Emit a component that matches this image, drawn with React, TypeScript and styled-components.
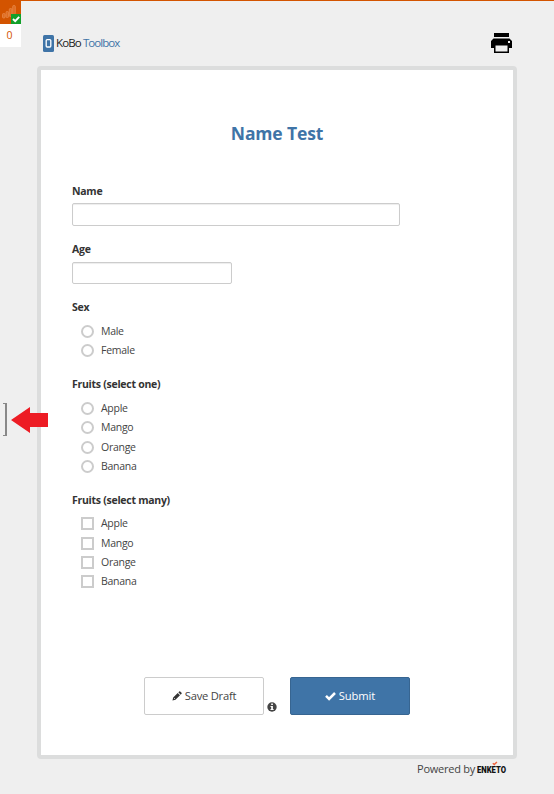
import React from "react";
import styled, { createGlobalStyle } from "styled-components";

const GlobalStyle = createGlobalStyle`
  * { box-sizing: border-box; }
  body {
    margin: 0;
    background: #efefef;
    color: #444;
    font-family: "Open Sans", "Noto Sans", sans-serif;
    font-size: 10.5px;
  }
`;

const Page = styled.div`
  position: relative;
  display: flex;
  width: 554px;
  height: 794px;
  overflow: hidden;
  border-top: 1px solid #d35400;
`;

const SideBar = styled.aside`
  flex: 0 0 37px;
  display: flex;
  flex-direction: column;
`;

const OfflineStatus = styled.div`
  width: 21px;
  height: 23px;
  background: #d35400;
  svg { display: block; }
`;

const QueueCount = styled.div`
  width: 21px;
  height: 23px;
  padding-right: 2px;
  background: #fff;
  color: #d35400;
  line-height: 22px;
  text-align: center;
`;

const QueueToggle = styled.div`
  width: 4px;
  height: 33px;
  margin: 356px 0 0 3px;
  border: 1px solid #888;
  border-left: 0;
  border-right-width: 2px;
`;

const Pointer = styled.svg`
  position: absolute;
  left: 11px;
  top: 406px;
`;

const Main = styled.main`
  width: 480px;
  display: flex;
  flex-direction: column;
`;

const Header = styled.header`
  height: 65px;
  display: flex;
  justify-content: space-between;
  align-items: flex-start;
  padding: 31px 5px 0 6px;
`;

const PrintIcon = styled.svg`
  display: block;
  margin-top: 1px;
`;

const Paper = styled.form`
  height: 693px;
  padding: 0 31px;
  border: 4px solid #dcdddd;
  border-radius: 4px;
  background: #fff;
`;

const Title = styled.h1`
  margin: 0;
  padding-top: 51px;
  height: 113px;
  color: #3f74a7;
  font-size: 17.5px;
  font-weight: 700;
  letter-spacing: -0.15px;
  line-height: 24px;
  text-align: center;
`;

const Question = styled.fieldset<{ $height: number }>`
  height: ${(p) => p.$height}px;
  margin: 0;
  padding: 0;
  border: 0;
`;

const Label = styled.div<{ $gap: number }>`
  height: 16px;
  margin-bottom: ${(p) => p.$gap}px;
  color: #333;
  font-size: 10.5px;
  font-weight: 700;
  letter-spacing: -0.27px;
  line-height: 16px;
  white-space: nowrap;
`;

const TextInput = styled.input<{ $width: number; $height: number }>`
  display: block;
  width: ${(p) => p.$width}px;
  height: ${(p) => p.$height}px;
  border: 1px solid #ccc;
  border-radius: 2px;
  background: #fff;
  box-shadow: inset 0 1px 1px rgba(0, 0, 0, 0.075);
  outline: 0;
`;

const Option = styled.label`
  display: flex;
  align-items: center;
  height: 19.3px;
  padding-left: 9px;
  gap: 7px;
  letter-spacing: -0.27px;
`;

const OptionText = styled.span`
  margin-top: -1px;
`;

const Choice = styled.input`
  appearance: none;
  width: 13px;
  height: 13px;
  margin: 0;
  border: 2px solid #ccc;
  border-radius: ${(p) => (p.type === "radio" ? "50%" : "0")};
  background: #fff;
`;

const Actions = styled.div`
  display: flex;
  align-items: flex-end;
  padding: 69px 0 0 72px;
`;

const Button = styled.button<{ $primary?: boolean }>`
  display: flex;
  align-items: center;
  justify-content: center;
  gap: 3px;
  width: 120px;
  height: 38px;
  padding: 0 0 1px;
  border: 1px solid ${(p) => (p.$primary ? "#376591" : "#ccc")};
  border-radius: 2px;
  background: ${(p) => (p.$primary ? "#3f74a7" : "#fff")};
  color: ${(p) => (p.$primary ? "#fff" : "#444")};
  font: 400 11.2px "Open Sans", sans-serif;
  letter-spacing: ${(p) => (p.$primary ? "-0.1px" : "-0.25px")};
`;

const InfoIcon = styled.svg`
  margin: 0 13px 3px 3px;
`;

const Footer = styled.footer`
  display: flex;
  justify-content: flex-end;
  align-items: center;
  gap: 2px;
  height: 20px;
  padding-right: 10px;
  font-size: 11px;
  letter-spacing: -0.25px;
  white-space: nowrap;
`;

const PoweredBy = styled.span`
  margin-top: -1px;
`;

const Brand = styled.div`
  display: flex;
  align-items: flex-start;
`;

const BrandWord = styled.span<{ $color: string; $spacing: number }>`
  margin-left: 2px;
  color: ${(p) => p.$color};
  font-size: 11.5px;
  line-height: 22px;
  letter-spacing: ${(p) => p.$spacing}px;
`;

const KoboLogo = () => (
  <Brand>
    <svg width="11" height="22" viewBox="0 0 11 22">
      <rect x="0" y="3" width="11" height="17" rx="1.5" fill="#3f74a7" />
      <rect x="3.2" y="7.6" width="4.6" height="7.4" rx="1" fill="none" stroke="#fff" strokeWidth="1.3" />
    </svg>
    <BrandWord $color="#222" $spacing={-0.85}>KoBo</BrandWord>
    <BrandWord $color="#3f74a7" $spacing={-0.95}>Toolbox</BrandWord>
  </Brand>
);

const EnketoLogo = () => (
  <svg width="30" height="16" viewBox="0 0 30 16" overflow="visible">
    <text x="0" y="12" fontFamily="Roboto" fontWeight="900" fontSize="9.6" letterSpacing="0" fill="#111" textLength="29" lengthAdjust="spacingAndGlyphs">ENKETO</text>
    <path d="M15.8 2.3l1.5 1.3L19.9 1" fill="none" stroke="#ee6540" strokeWidth="1.5" />
  </svg>
);

type QuestionData = { label: string; type: "radio" | "checkbox"; height: number; gap: number; options: string[] };

const fruits = ["Apple", "Mango", "Orange", "Banana"];
const questions: QuestionData[] = [
  { label: "Sex", type: "radio", height: 77, gap: 7, options: ["Male", "Female"] },
  { label: "Fruits (select one)", type: "radio", height: 116, gap: 7, options: fruits },
  { label: "Fruits (select many)", type: "checkbox", height: 116, gap: 6.3, options: fruits },
];

export default function App() {
  return (
    <>
      <GlobalStyle />
      <Page>
        <SideBar>
          <OfflineStatus>
            <svg width="21" height="23" viewBox="0 0 21 23">
              <g fill="#df6d22" stroke="#e98e50" strokeWidth=".7">
                <rect x="2.5" y="12.5" width="2.6" height="4.5" rx="1" />
                <rect x="6" y="10.5" width="2.6" height="6" rx="1" />
                <rect x="9.3" y="7.5" width="2.6" height="8" rx="1" />
                <rect x="12.7" y="4.5" width="2.6" height="9" rx="1" />
              </g>
              <rect x="11" y="13" width="10" height="10" fill="#13a02a" />
              <path d="M13 18l2.2 2.2 4-4.4" fill="none" stroke="#fff" strokeWidth="1.9" />
            </svg>
          </OfflineStatus>
          <QueueCount>0</QueueCount>
          <QueueToggle />
        </SideBar>
        <Main>
          <Header>
            <KoboLogo />
            <PrintIcon width="21" height="21" viewBox="0 0 21 21">
              <path d="M3 0h15v4H3zM2.5 5.5h16L21 8v7h-3v5H3v-5H0V8z" />
              <path d="M4.5 12.5h12v6h-12z" fill="#efefef" />
              <rect x="17" y="8" width="2" height="2" fill="#efefef" />
            </PrintIcon>
          </Header>
          <Paper>
            <Title>Name Test</Title>
            <Question $height={58}>
              <Label $gap={4}>Name</Label>
              <TextInput $width={328} $height={23} />
            </Question>
            <Question $height={58}>
              <Label $gap={5}>Age</Label>
              <TextInput $width={160} $height={22} />
            </Question>
            {questions.map((q) => (
              <Question key={q.label} $height={q.height}>
                <Label $gap={q.gap}>{q.label}</Label>
                {q.options.map((name) => (
                  <Option key={name}>
                    <Choice type={q.type} name={q.label} />
                    <OptionText>{name}</OptionText>
                  </Option>
                ))}
              </Question>
            ))}
            <Actions>
              <Button type="button">
                <svg width="10" height="10" viewBox="0 0 11 11">
                  <path d="M.5 10.5l.8-3.3 5-5 2.5 2.5-5 5zM7 1.5l1-1q.5-.5 1 0l1.5 1.5q.5.5 0 1l-1 1z" fill="#333" />
                  <path d="M2.3 7.8l1 1" stroke="#fff" strokeWidth=".8" />
                </svg>
                Save Draft
              </Button>
              <InfoIcon width="10" height="10" viewBox="0 0 10 10">
                <circle cx="5" cy="5" r="4.7" fill="#444" />
                <path d="M4.2 1.6h1.7v1.5H4.2zM3.5 4h2.4v3h.7v1.1H3.5V7h.7V5h-.7z" fill="#fff" />
              </InfoIcon>
              <Button type="button" $primary>
                <svg width="11" height="10" viewBox="0 0 11 10">
                  <path d="M1 4.8l3.1 3.1L10 2" fill="none" stroke="#fff" strokeWidth="2.5" />
                </svg>
                Submit
              </Button>
            </Actions>
          </Paper>
          <Footer>
            <PoweredBy>Powered by</PoweredBy>
            <EnketoLogo />
          </Footer>
        </Main>
        <Pointer width="37" height="27" viewBox="0 0 37 27">
          <path d="M0 13L19 0v6h18v14H19v6z" fill="#ed1c24" />
        </Pointer>
      </Page>
    </>
  );
}
